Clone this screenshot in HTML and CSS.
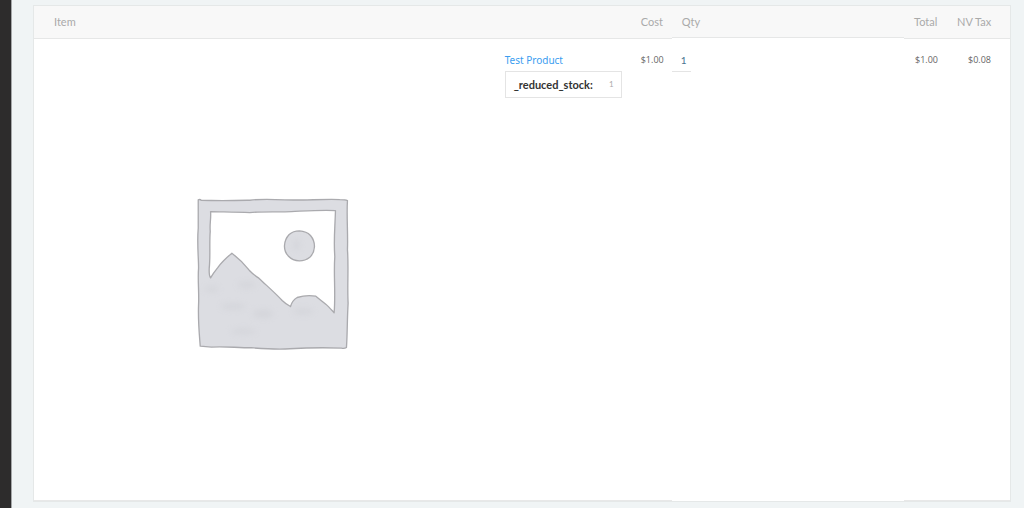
FILE: index.html
```html
<!DOCTYPE html>
<html lang="en">
<head>
    <meta charset="UTF-8">
    <meta name="viewport" content="width=device-width, initial-scale=1.0">
    <title>Order Items</title>
    <link rel="stylesheet" href="styles.css">
</head>
<body>
    <div class="sidebar"></div>
    <main class="content">
        <table class="order-items">
            <colgroup>
                <col>
                <col class="col-name">
                <col class="col-cost">
                <col class="col-qty">
                <col class="col-total">
                <col class="col-tax">
            </colgroup>
            <thead>
                <tr>
                    <th class="item" colspan="2">Item</th>
                    <th class="cost">Cost</th>
                    <th class="qty">Qty</th>
                    <th class="total">Total</th>
                    <th class="tax">NV Tax</th>
                </tr>
            </thead>
            <tbody>
                <tr>
                    <td class="thumb">
                        <svg class="placeholder" viewBox="0 0 437 437" role="img" aria-label="Product image">
                            <defs>
                                <filter id="soft" x="-50%" y="-50%" width="200%" height="200%">
                                    <feGaussianBlur stdDeviation="10"/>
                                </filter>
                            </defs>
                            <g transform="translate(136 135) scale(.3333)" stroke-linejoin="round">
                                <path class="shape" fill-rule="evenodd" d="M25 30Q30 27 34 31C90 33 130 32 180 31C210 27 250 28 285 30C340 32 400 27 450 29Q467 29 473 32C470 80 475 130 473 180C477 230 472 290 475 340C472 390 473 430 470 473Q464 477 455 475C400 473 350 474 300 477C260 480 225 477 185 474C140 474 100 469 65 472L31 469C28 430 24 390 26 345C28 310 23 270 26 235C26 200 21 160 25 115Z
                                    M62 65C100 66 140 66 180 68C220 64 265 67 305 65C350 63 390 60 437 62C436 110 431 150 435 200C431 255 438 310 433 369C425 360 417 350 408 343Q394 332 378 319Q350 314 322 323Q307 332 302 350Q287 342 277 332C255 308 230 287 207 265Q190 254 178 241Q154 211 126 190Q98 213 83 234Q70 250 62 264Q57 258 58 235C62 200 58 160 61 125C59 100 64 85 62 65Z"/>
                                <path class="shape" d="M329 123Q350 124 362 137Q374 151 374 170Q373 190 360 202Q346 213 329 213Q308 212 296 199Q283 185 284 167Q285 148 298 134Q310 123 329 123Z"/>
                                <g class="texture" filter="url(#soft)">
                                    <ellipse cx="65" cy="298" rx="22" ry="8"/>
                                    <ellipse cx="170" cy="285" rx="28" ry="9"/>
                                    <ellipse cx="130" cy="350" rx="38" ry="9"/>
                                    <ellipse cx="220" cy="372" rx="32" ry="12"/>
                                    <ellipse cx="340" cy="365" rx="32" ry="9"/>
                                    <ellipse cx="160" cy="425" rx="38" ry="8"/>
                                    <ellipse cx="320" cy="165" rx="10" ry="18"/>
                                </g>
                            </g>
                        </svg>
                    </td>
                    <td class="name">
                        <a href="#">Test Product</a>
                        <table class="meta">
                            <tr>
                                <th scope="row">_reduced_stock:</th>
                                <td>1</td>
                            </tr>
                        </table>
                    </td>
                    <td class="cost">$1.00</td>
                    <td class="qty"><span class="count">1</span></td>
                    <td class="total">$1.00</td>
                    <td class="tax">$0.08</td>
                </tr>
            </tbody>
        </table>
    </main>
</body>
</html>
```

FILE: styles.css
```css
body {
    display: flex;
    min-height: 100vh;
    margin: 0;
    background-color: #f0f4f5;
    font-family: Lato, "Open Sans", sans-serif;
    font-size: 10px;
    line-height: 14px;
    color: #666;
}

.sidebar {
    flex: none;
    width: 11px;
    background-color: #2d2c2c;
    border-right: 1px solid #a5a7a8;
}

.content {
    flex: 1;
    padding: 5px 13px 5px 21px;
}

/* Order table */
.order-items {
    width: 100%;
    table-layout: fixed;
    border-spacing: 0;
    background-color: #fff;
    border: 1px solid #e5e8e8;
}

.col-name {
    width: 136px;
}

.col-cost {
    width: 41px;
}

.col-qty {
    width: 23.8%;
}

.col-total {
    width: 43px;
}

.col-tax {
    width: 63px;
}

.order-items > thead th {
    padding: 9px 10px;
    background-color: #f8f8f8;
    border-bottom: 1px solid #e6e7e7;
    font-size: 11px;
    font-weight: normal;
    color: #aaa;
    text-align: left;
    white-space: nowrap;
}

.order-items > thead .item {
    padding-left: 20px;
}

.order-items > thead .qty {
    border-bottom-color: #fff;
    box-shadow: inset 0 -1px #e6e7e7;
}

.order-items > tbody > tr > td {
    padding: 14px 9px 8px 10px;
    border-bottom: 1px solid #e8e8e8;
    vertical-align: top;
}

.order-items > tbody > tr > .cost,
.order-items > tbody > tr > .total,
.order-items > tbody > tr > .tax {
    font-family: "Open Sans", sans-serif;
    font-size: 9px;
}

.order-items > tbody > tr > .qty {
    padding-left: 0;
    border-bottom-color: #fff;
}

.order-items .total,
.order-items .tax {
    text-align: right;
}

.order-items > thead .tax,
.order-items > tbody > tr > .tax {
    padding-right: 19px;
}

.order-items > tbody > tr > .thumb {
    padding: 16px 4px 8px 20px;
}

/* Placeholder image */
.placeholder {
    display: block;
    width: 100%;
    height: auto;
}

.shape {
    fill: #dcdde2;
    stroke: #aaaaae;
    stroke-width: 4;
}

.texture {
    fill: #c8c9cf;
    opacity: 0.4;
}

/* Product name and meta */
.name a {
    display: block;
    font-family: "Noto Sans", sans-serif;
    color: #3a9df0;
    text-decoration: none;
}

.meta {
    width: 100%;
    margin-top: 4px;
    border: 1px solid #e4e4e4;
    border-spacing: 0;
}

.meta th {
    padding: 6px 0 5px 8px;
    font-size: 11px;
    font-weight: bold;
    color: #333;
    text-align: left;
}

.meta td {
    padding: 5px 7px 6px 0;
    font-size: 8px;
    color: #aaa;
    text-align: right;
    vertical-align: top;
}

.count {
    display: inline-block;
    padding: 0 4px 4px 9px;
    border-bottom: 1px solid #e4e4e4;
    color: #4b7590;
}
```
